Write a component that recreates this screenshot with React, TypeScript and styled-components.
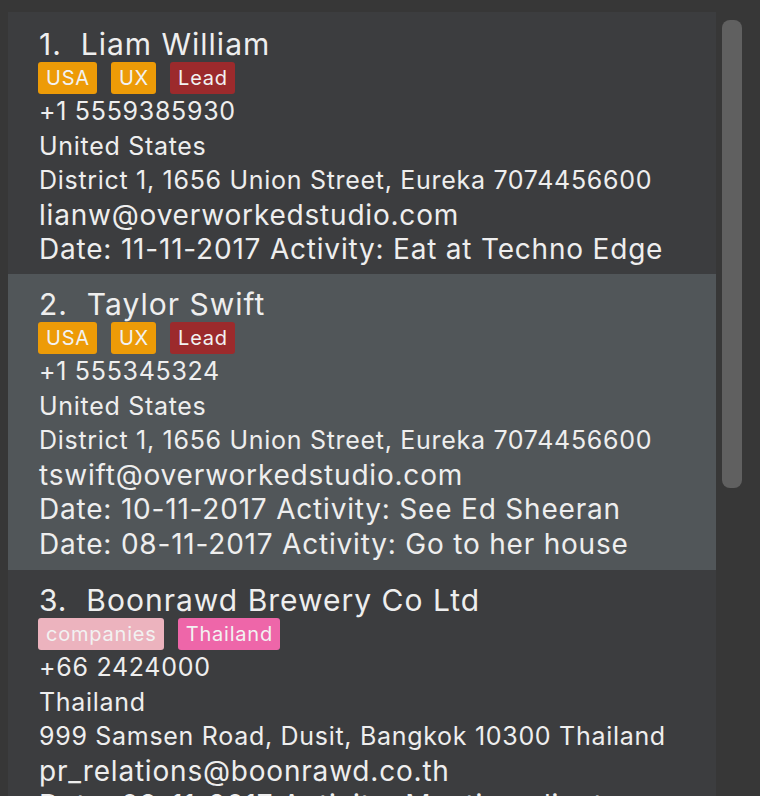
import React from "react";
import styled, { createGlobalStyle } from "styled-components";

const Global = createGlobalStyle`
  html, body { margin: 0; padding: 0; background: #373737; }
  body { font-family: Inter, "Noto Sans", sans-serif; overflow: hidden; }
`;

const Page = styled.div`
  display: flex;
  align-items: flex-start;
  height: 796px;
  overflow: hidden;
  padding: 12px 0 0 8px;
  box-sizing: border-box;
  gap: 6px;
`;

const List = styled.div`
  width: 708px;
  display: flex;
  flex-direction: column;
  background: #3c3d3f;
`;

const Card = styled.div<{ $selected?: boolean; $first?: boolean; $h: number }>`
  background: ${(p) => (p.$selected ? "#515659" : "#3c3d3f")};
  padding: ${(p) => (p.$first ? "14px" : "12px")} 0 0 31px;
  height: ${(p) => p.$h}px;
  box-sizing: border-box;
  color: #eeeeee;
`;

const Name = styled.div`
  font-size: 30px;
  letter-spacing: 1px;
  line-height: 36px;
  white-space: pre;
`;

const Tags = styled.div`
  display: flex;
  gap: 14px;
  margin: 0 0 0 -1px;
  height: 32px;
`;

const Tag = styled.span<{ $bg: string }>`
  background: ${(p) => p.$bg};
  color: #f2f2f2;
  font-size: 20px;
  letter-spacing: 0.8px;
  line-height: 32px;
  height: 32px;
  padding: 0 7px 0 8px;
  border-radius: 3px;
`;

const Line = styled.div<{ $big?: boolean }>`
  font-size: ${(p) => (p.$big ? "28px" : "25px")};
  letter-spacing: ${(p) => (p.$big ? "0.8px" : "0.7px")};
  line-height: 34.5px;
  white-space: nowrap;
`;

const Track = styled.div`
  padding-top: 8px;
`;

const Thumb = styled.div`
  width: 20px;
  height: 468px;
  border-radius: 8px;
  background: #606060;
`;

type Person = {
  n: number;
  name: string;
  tags: { t: string; c: string }[];
  phone: string;
  country: string;
  address: string;
  email: string;
  acts: string[];
  h: number;
};

const ORANGE = "#ed9b07";
const RED = "#9c2a2c";

const people: Person[] = [
  {
    n: 1,
    name: "Liam William",
    tags: [
      { t: "USA", c: ORANGE },
      { t: "UX", c: ORANGE },
      { t: "Lead", c: RED },
    ],
    phone: "+1 5559385930",
    country: "United States",
    address: "District 1, 1656 Union Street, Eureka 7074456600",
    email: "lianw@overworkedstudio.com",
    acts: ["Date: 11-11-2017 Activity: Eat at Techno Edge"],
    h: 262,
  },
  {
    n: 2,
    name: "Taylor Swift",
    tags: [
      { t: "USA", c: ORANGE },
      { t: "UX", c: ORANGE },
      { t: "Lead", c: RED },
    ],
    phone: "+1 555345324",
    country: "United States",
    address: "District 1, 1656 Union Street, Eureka 7074456600",
    email: "tswift@overworkedstudio.com",
    acts: [
      "Date: 10-11-2017 Activity: See Ed Sheeran",
      "Date: 08-11-2017 Activity: Go to her house",
    ],
    h: 296,
  },
  {
    n: 3,
    name: "Boonrawd Brewery Co Ltd",
    tags: [
      { t: "companies", c: "#ecb3be" },
      { t: "Thailand", c: "#ee66a9" },
    ],
    phone: "+66 2424000",
    country: "Thailand",
    address: "999 Samsen Road, Dusit, Bangkok 10300 Thailand",
    email: "pr_relations@boonrawd.co.th",
    acts: ["Date: 08-11-2017 Activity: Meeting client"],
    h: 262,
  },
];

export default function App() {
  return (
    <>
      <Global />
      <Page>
        <List>
          {people.map((p, i) => (
            <Card key={p.n} $selected={i === 1} $first={i === 0} $h={p.h}>
              <Name>{`${p.n}.  ${p.name}`}</Name>
              <Tags>
                {p.tags.map((t) => (
                  <Tag key={t.t} $bg={t.c}>
                    {t.t}
                  </Tag>
                ))}
              </Tags>
              <Line>{p.phone}</Line>
              <Line>{p.country}</Line>
              <Line>{p.address}</Line>
              <Line $big>{p.email}</Line>
              {p.acts.map((a) => (
                <Line $big key={a}>
                  {a}
                </Line>
              ))}
            </Card>
          ))}
        </List>
        <Track>
          <Thumb />
        </Track>
      </Page>
    </>
  );
}
